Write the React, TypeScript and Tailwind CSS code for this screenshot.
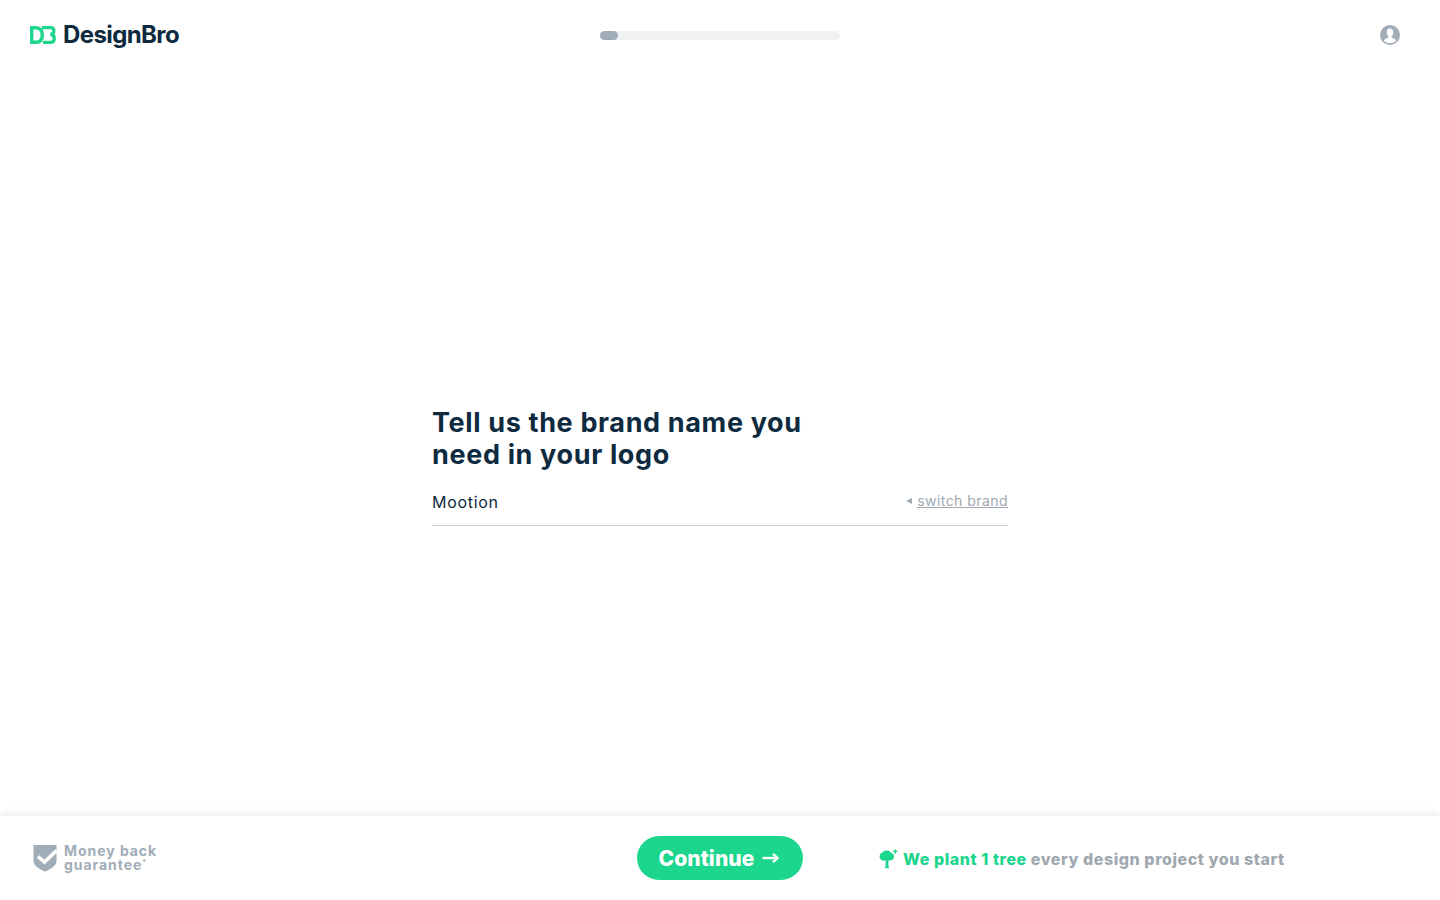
import React from "react";

const font = "font-['Inter',sans-serif]";

const Logo = () => (
  <div className="flex items-center gap-[7px]">
    <svg width="26" height="18" viewBox="0 0 26 18" fill="none">
      <path d="M1.7 1.7H6C10.2 1.7 12.3 4.5 12.3 9C12.3 13.5 10.2 16.3 6 16.3H1.7Z" stroke="#1CD68D" strokeWidth="3.4" />
      <path d="M12 1.7H20.5C23 1.7 23.9 3 23.9 4.7C23.9 6.8 22.5 8 20.5 8.4C23 8.6 24.3 10.2 24.3 12.4C24.3 15 22.8 16.3 20 16.3H13" stroke="#1CD68D" strokeWidth="3.2" />
    </svg>
    <span className="text-[24px] font-bold leading-none tracking-[-0.6px] text-[#0E2A3F]">
      DesignBro
    </span>
  </div>
);

const ProfileIcon = () => (
  <svg width="20" height="20" viewBox="0 0 20 20">
    <defs>
      <clipPath id="profile-clip">
        <circle cx="10" cy="10" r="10" />
      </clipPath>
    </defs>
    <circle cx="10" cy="10" r="10" fill="#A0ADB8" />
    <g clipPath="url(#profile-clip)" fill="#fff">
      <path d="M10 3.6C7.9 3.6 6.7 5.1 6.7 7.2C6.7 9 7.4 10.4 8.4 11.2V12.4C7 13.2 4.4 13.8 3.9 15.5C5.2 17.2 7.4 18.2 10 18.2C12.6 18.2 14.8 17.2 16.1 15.5C15.6 13.8 13 13.2 11.6 12.4V11.2C12.6 10.4 13.3 9 13.3 7.2C13.3 5.1 12.1 3.6 10 3.6Z" />
    </g>
  </svg>
);

const ShieldIcon = () => (
  <svg width="24" height="28" viewBox="0 0 24 28">
    <path d="M0.5 1H23.5V17C23.5 21.5 18 25 12 27.5C6 25 0.5 21.5 0.5 17Z" fill="#A0ADB8" />
    <path d="M5 12.5L11.5 18L23.5 6.5" fill="none" stroke="#fff" strokeWidth="3.6" />
  </svg>
);

const TreeIcon = () => (
  <svg width="20" height="20" viewBox="0 0 20 20" fill="#1CD68D">
    <path d="M7.6 1.4C9.6 1.4 11.2 2.3 11.9 3.7C13.7 4 15 5.5 15 7.4C15 9.7 13.2 11.6 10.9 11.6H9.4V15.4C9.4 16.8 9.6 17.8 10.2 19.2H5.8C6.4 17.8 6.6 16.8 6.6 15.4V11.6H5C2.4 11.6 0.6 9.8 0.6 7.4C0.6 5.5 1.7 4 3.4 3.5C4.2 2.2 5.7 1.4 7.6 1.4Z" />
    <path d="M15.6 0.2H16.9V1.8H18.5V3.1H16.9V4.7H15.6V3.1H14V1.8H15.6Z" />
  </svg>
);

// arrow of the Continue button: short shaft with a small head
const ArrowIcon = () => (
  <svg width="17" height="12" viewBox="0 0 17 12" fill="none" stroke="#fff" strokeWidth="2.4">
    <path d="M0.5 6H15" />
    <path d="M11 1.8L15.4 6L11 10.2" />
  </svg>
);

export default function App() {
  return (
    <div className={`flex h-screen flex-col bg-white ${font}`}>
      <header className="grid h-[70px] shrink-0 grid-cols-[570px_240px_1fr] items-center pl-[30px] pr-[40px]">
        <Logo />
        <div className="h-[9px] rounded-full bg-[#EFF1F3]">
          <div className="h-[9px] w-[18px] rounded-full bg-[#A0ADB8]" />
        </div>
        <div className="flex justify-end">
          <ProfileIcon />
        </div>
      </header>

      <main className="flex flex-1 justify-center pt-[337px]">
        <div className="w-[576px]">
          <h1 className="text-[27px] font-bold leading-[32px] tracking-[0.65px] text-[#0E2A3F]">
            Tell us the brand name you
            <br />
            need in your logo
          </h1>
          <div className="mt-[16px] flex h-[39px] items-start justify-between border-b border-[#C9CED3] pt-[4px]">
            <span className="text-[16px] leading-[22px] tracking-[0.7px] text-[#0E2A3F]">Mootion</span>
            <span className="flex items-center gap-[5px] text-[14px] leading-[20px] tracking-[0.45px] text-[#A0A8B0]">
              <span className="h-0 w-0 border-y-[3px] border-r-[6px] border-y-transparent border-r-[#A0A8B0]" />
              <span className="underline">switch brand</span>
            </span>
          </div>
        </div>
      </main>

      <footer className="grid h-[84px] shrink-0 grid-cols-[1fr_166px_1fr] items-center shadow-[0_-3px_8px_rgba(0,0,0,0.07)]">
        <div className="flex items-center gap-[7px] pl-[33px]">
          <ShieldIcon />
          <div className="text-[14px] font-bold leading-[14px] tracking-[0.95px] text-[#A0ADB8]">
            <div>Money back</div>
            <div>
              guarantee<span className="align-top text-[7px] leading-[10px]">*</span>
            </div>
          </div>
        </div>
        <button className="flex h-[44px] items-center justify-center gap-[7px] rounded-full bg-[#1CD68D] pr-[3px] text-[21px] font-extrabold tracking-[0.1px] text-white">
          <span className="pt-px">Continue</span>
          <ArrowIcon />
        </button>
        <div className="flex items-center gap-[4px] pl-[76px] pt-[2px] text-[16px] font-extrabold tracking-[0.56px] text-[#A0A8B0]">
          <TreeIcon />
          <span>
            <span className="text-[#1CD68D]">We plant 1 tree</span> every design project you start
          </span>
        </div>
      </footer>
    </div>
  );
}
